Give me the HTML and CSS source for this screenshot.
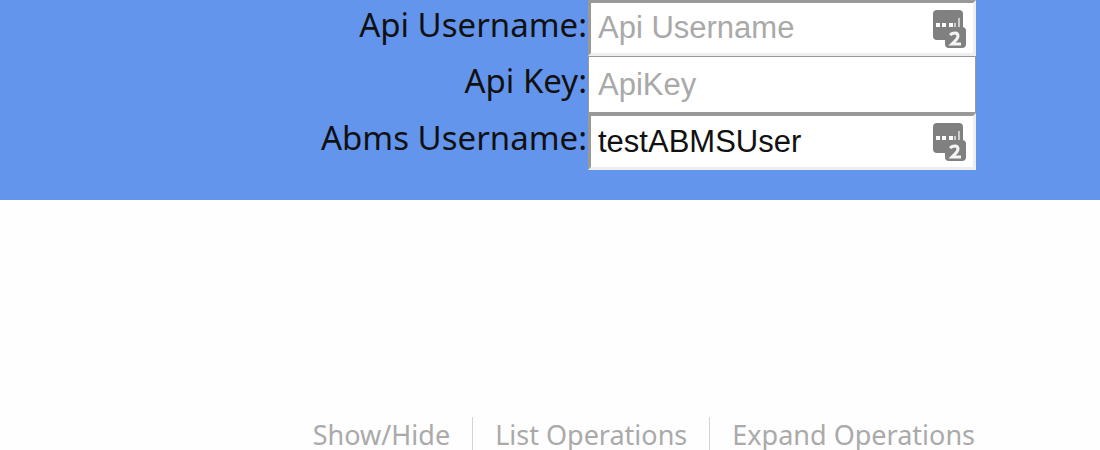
FILE: index.html
```html
<!DOCTYPE html>
<html lang="en">
<head>
<meta charset="utf-8">
<title>API Explorer</title>
<link rel="stylesheet" href="styles.css">
</head>
<body>
<svg class="sprite" aria-hidden="true">
  <symbol id="manager" viewBox="0 0 36 40">
    <rect x="1" y="1" width="30" height="30" rx="4" fill="#808080"/>
    <path fill="#fff" d="M4 14h4v4h-4zM10 14h4v4h-4zM17 14h4v4h-4z"/>
    <path fill="#ccc" d="M22 14h2v4h-2zM26 9h2v9h-2z"/>
    <rect x="13" y="18" width="21" height="21" rx="4" fill="#808080"/>
    <path fill="none" stroke="#f4f4f4" stroke-width="3" d="M18 26Q20 24 23 24Q26 24 26 27Q26 29 23 32L20 35H29"/>
  </symbol>
</svg>
<form class="header">
  <div class="fields">
    <label class="label" for="api-user">Api Username:</label>
    <div class="field"><input class="input" id="api-user" type="text" placeholder="Api Username"><svg class="manager" aria-hidden="true"><use href="#manager"/></svg></div>
    <label class="label" for="api-key">Api Key:</label>
    <div class="field"><input class="input input-flat" id="api-key" type="text" placeholder="ApiKey"></div>
    <label class="label" for="abms-user">Abms Username:</label>
    <div class="field"><input class="input" id="abms-user" type="text" value="testABMSUser"><svg class="manager" aria-hidden="true"><use href="#manager"/></svg></div>
  </div>
</form>
<nav class="operations">
  <a class="link" href="#toggle">Show/Hide</a>
  <a class="link" href="#list">List Operations</a>
  <a class="link" href="#expand">Expand Operations</a>
</nav>
</body>
</html>
```
FILE: styles.css
```css
* { box-sizing: border-box; }
body { margin: 0; background: #fefefe; font-family: "Noto Sans", sans-serif; overflow: hidden; }
.sprite { position: absolute; width: 0; height: 0; }
.header { background: #6495ed; padding: 0 124px 30px 0; }
.fields { display: grid; grid-template-columns: 1fr 388px; grid-template-rows: 56px 57px 57px; }
.label { padding-right: 1px; color: #111; font-size: 33px; line-height: 50px; text-align: right; white-space: nowrap; }
.field { position: relative; }
.input { display: block; width: 100%; height: 100%; padding: 0 48px 0 7px; border: 3px solid; border-color: #999 #eee #eee #999; border-radius: 0; background: #fff; color: #111; font: 31px "Liberation Sans", Arial, sans-serif; }
.input-flat { border: 1px solid #999; padding-left: 9px; }
.input::placeholder { color: #a9a9a9; opacity: 1; }
.manager { position: absolute; right: 8px; top: 9px; width: 36px; height: 40px; }
.operations { display: flex; justify-content: flex-end; padding: 217px 125px 0 0; }
.link { color: #aaa; font-size: 27px; line-height: 35px; text-decoration: none; white-space: nowrap; }
.link + .link { border-left: 1px solid #d4d4d4; margin-left: 22px; padding-left: 22px; }
```
